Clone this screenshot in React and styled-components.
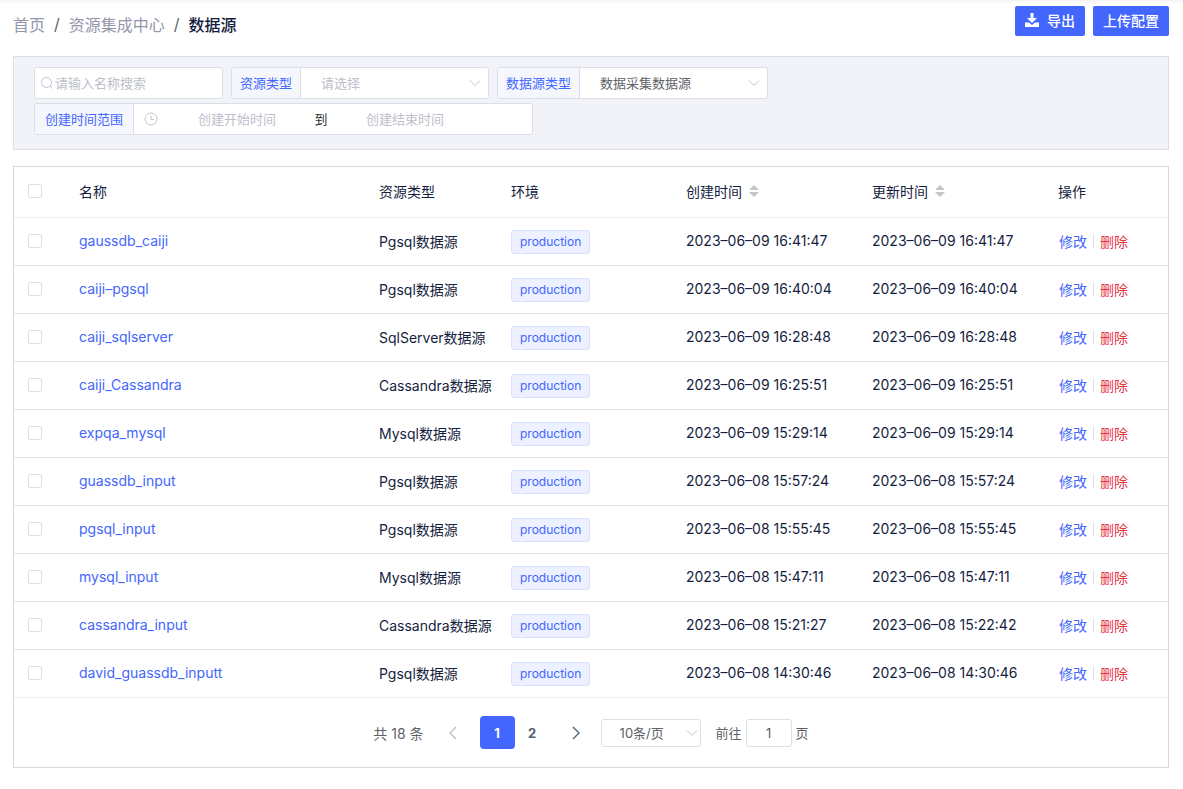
import React, { useState } from 'react';
import styled, { createGlobalStyle, css } from 'styled-components';

const GlobalStyle = createGlobalStyle`
  *, *::before, *::after {
    box-sizing: border-box;
  }

  body {
    margin: 0;
    background: #fff;
    color: #151e40;
    font-family: Inter, 'Noto Sans CJK SC', sans-serif;
    font-size: 14px;
  }

  input, select, button {
    font-family: inherit;
  }
`;

const Page = styled.div`
  padding: 0 14px 20px 13px;
  background: linear-gradient(#f3f3f4, #fff) top / 100% 4px no-repeat;
`;

const Header = styled.header`
  display: flex;
  justify-content: space-between;
  padding: 6px 0 14px;
`;

const Breadcrumb = styled.nav`
  display: flex;
  align-items: center;
  gap: 9px;
  height: 36px;
  font-size: 16px;
  color: #5c6375;

  a {
    color: #9495aa;
    text-decoration: none;
  }

  strong {
    color: #151e40;
    font-weight: 500;
  }
`;

const Actions = styled.div`
  display: flex;
  align-items: flex-start;
  gap: 8px;
`;

const PrimaryButton = styled.button`
  display: flex;
  align-items: center;
  gap: 8px;
  height: 30px;
  padding: 0 10px 2px;
  border: 0;
  border-radius: 2px;
  background: #4366ff;
  color: #fff;
  font-size: 14px;
  font-weight: 500;
`;

const FilterPanel = styled.form`
  display: flex;
  flex-wrap: wrap;
  gap: 4px 8px;
  margin-bottom: 16px;
  padding: 10px 380px 14px 20px;
  border: 1px solid #dbdde8;
  background: #f2f3f8;
`;

const Field = styled.div`
  position: relative;
  display: flex;
  align-items: center;
  width: ${({ $width }) => $width}px;
  height: 32px;
  border: 1px solid #dbdee7;
  border-radius: 3px;
  background: #fff;
  overflow: hidden;
  font-size: 13px;
`;

const FieldLabel = styled.label`
  flex: none;
  display: flex;
  align-items: center;
  height: 100%;
  padding: 0 ${({ $pad = 8 }) => $pad}px 2px;
  border-right: 1px solid #dbdee7;
  background: #f5f7fc;
  color: #4366ff;
`;

const bareControl = css`
  min-width: 0;
  height: 100%;
  padding: 0;
  border: 0;
  outline: 0;
  background: transparent;
  font-size: 13px;

  &::placeholder {
    color: #bcc0ca;
    opacity: 1;
  }
`;

const TextInput = styled.input`
  ${bareControl}
  flex: 1;
`;

const Select = styled.select`
  ${bareControl}
  flex: 1;
  padding: 0 30px 0 ${({ $indent }) => $indent}px;
  appearance: none;
  color: ${({ $empty }) => ($empty ? '#bcc0ca' : '#606266')};
`;

const Arrow = styled.svg`
  position: absolute;
  right: ${({ $right = 7 }) => $right}px;
  top: 50%;
  margin-top: -6px;
  pointer-events: none;
`;

const SearchMark = styled.svg`
  flex: none;
  margin: 0 1px 0 5px;
`;

const ClockMark = styled.svg`
  flex: none;
  margin: 0 6px 0 10px;
`;

const DateInput = styled.input`
  ${bareControl}
  width: 146px;
  text-align: center;
`;

const RangeWord = styled.span`
  width: 22px;
  padding-bottom: 2px;
  text-align: center;
  color: #303133;
`;

const Card = styled.section`
  border: 1px solid #d8d9db;
`;

const Table = styled.table`
  width: 100%;
  table-layout: fixed;
  border-collapse: separate;
  border-spacing: 0;
`;

const Th = styled.th`
  height: 51px;
  padding: 0 10px 2px;
  border-bottom: 1px solid #ebeef5;
  font-weight: 400;
  text-align: left;
`;

const Td = styled.td`
  height: 48px;
  padding: 0 10px;
  border-bottom: 1px solid #e0e1e4;
  white-space: nowrap;

  tr:last-child & {
    border-bottom-color: #ebeef5;
  }
`;

const TextTd = styled(Td)`
  padding-bottom: 2px;
`;

const Checkbox = styled.input`
  display: block;
  width: 14px;
  height: 14px;
  margin: 0 0 0 4px;
  border: 1px solid #dcdfe6;
  border-radius: 2px;
  background: #fff;
  appearance: none;

  &:checked {
    border-color: #4366ff;
    background: #4366ff;
  }
`;

const NameLink = styled.a`
  color: #4366ff;
  text-decoration: none;
`;

const Tag = styled.span`
  display: block;
  width: fit-content;
  height: 24px;
  padding: 0 8px;
  border: 1px solid #d9e0ff;
  border-radius: 3px;
  background: #ecf0ff;
  color: #4366ff;
  font-size: 12px;
  line-height: 22px;
`;

const SortButton = styled.button`
  display: flex;
  align-items: center;
  gap: 7px;
  padding: 0;
  border: 0;
  background: none;
  color: inherit;
  font-size: 14px;
`;

const RowActions = styled.div`
  display: flex;
  align-items: center;
`;

const RowButton = styled.button`
  padding: 0 0 0 1px;
  border: 0;
  background: none;
  color: ${({ $danger }) => ($danger ? '#e93445' : '#4366ff')};
  font-size: 14px;

  & + & {
    margin-left: 6px;
    padding-left: 7px;
    background: linear-gradient(#dcdfe6, #dcdfe6) left center / 1px 14px no-repeat;
  }
`;

const Pagination = styled.nav`
  display: flex;
  align-items: center;
  justify-content: center;
  height: 69px;
  font-size: 13px;
  color: #606266;
`;

const Total = styled.span`
  font-size: 14px;
`;

const PageButton = styled.button`
  display: flex;
  align-items: center;
  justify-content: center;
  width: 35px;
  height: 33px;
  padding: 0;
  border: 0;
  border-radius: 4px;
  background: ${({ $active }) => ($active ? '#4366ff' : 'transparent')};
  color: ${({ $active }) => ($active ? '#fff' : '#4f6475')};
  font-size: 13px;
  font-weight: 700;
`;

const StepButton = styled(PageButton)`
  width: 24px;
  margin: 0 ${({ $after = 0 }) => $after}px 0 ${({ $before = 0 }) => $before}px;
  color: ${({ disabled }) => (disabled ? '#bcc0ca' : '#4f6475')};
`;

const SizeBox = styled.div`
  position: relative;
  display: flex;
  width: 100px;
  height: 28px;
  margin: 0 15px 0 12px;
  border: 1px solid #dcdfe6;
  border-radius: 3px;
`;

const Jump = styled.label`
  display: flex;
  align-items: center;
  gap: 4px;
`;

const JumpInput = styled.input`
  width: 46px;
  height: 28px;
  padding: 0;
  border: 1px solid #dcdfe6;
  border-radius: 3px;
  color: #606266;
  font-size: 13px;
  text-align: center;
`;

const Col = styled.col`
  width: ${({ $width }) => ($width ? `${$width}px` : 'auto')};
`;

const ChevronDown = ({ right }) => (
  <Arrow $right={right} width="12" height="12" viewBox="0 0 12 12" fill="none" stroke="#c0c4cc">
    <path d="M1 3.5l5 5 5-5" />
  </Arrow>
);

const Step = ({ flip }) => (
  <svg width="9" height="14" viewBox="0 0 9 14" fill="none" stroke="currentColor" strokeWidth="1.4">
    <path d={flip ? 'M8 1L2 7l6 6' : 'M1 1l6 6-6 6'} />
  </svg>
);

const SortIcon = () => (
  <svg width="10" height="12" viewBox="0 0 10 12" fill="#c0c4cc">
    <path d="M0 5l5-5 5 5zM0 7l5 5 5-5z" />
  </svg>
);

const DownloadIcon = () => (
  <svg width="14" height="15" viewBox="0 0 14 15" fill="#fff">
    <path d="M5.500 0h3v5h3.500L7 10 2 5h3.500z" />
    <path d="M0 9.500h4l3 2.500 3-2.500h4V14H0z" />
  </svg>
);

const rows = [
  ['gaussdb_caiji', 'Pgsql数据源', '2023-06-09 16:41:47', '2023-06-09 16:41:47'],
  ['caiji-pgsql', 'Pgsql数据源', '2023-06-09 16:40:04', '2023-06-09 16:40:04'],
  ['caiji_sqlserver', 'SqlServer数据源', '2023-06-09 16:28:48', '2023-06-09 16:28:48'],
  ['caiji_Cassandra', 'Cassandra数据源', '2023-06-09 16:25:51', '2023-06-09 16:25:51'],
  ['expqa_mysql', 'Mysql数据源', '2023-06-09 15:29:14', '2023-06-09 15:29:14'],
  ['guassdb_input', 'Pgsql数据源', '2023-06-08 15:57:24', '2023-06-08 15:57:24'],
  ['pgsql_input', 'Pgsql数据源', '2023-06-08 15:55:45', '2023-06-08 15:55:45'],
  ['mysql_input', 'Mysql数据源', '2023-06-08 15:47:11', '2023-06-08 15:47:11'],
  ['cassandra_input', 'Cassandra数据源', '2023-06-08 15:21:27', '2023-06-08 15:22:42'],
  ['david_guassdb_inputt', 'Pgsql数据源', '2023-06-08 14:30:46', '2023-06-08 14:30:46'],
];

// hyphens are shown as en dashes in the table
const withDashes = value => value.replace(/-/g, '–');

const Filters = () => (
  <FilterPanel>
    <Field $width={189}>
      <SearchMark width="14" height="14" viewBox="0 0 14 14" fill="none" stroke="#c0c4cc">
        <circle cx="6.500" cy="6.500" r="5" />
        <path d="M10 10l2.500 2.500" />
      </SearchMark>
      <TextInput type="text" aria-label="名称" placeholder="请输入名称搜索" />
    </Field>
    <Field $width={258}>
      <FieldLabel htmlFor="resource-type">资源类型</FieldLabel>
      <Select id="resource-type" $indent={20} $empty defaultValue="">
        <option value="">请选择</option>
      </Select>
      <ChevronDown />
    </Field>
    <Field $width={271}>
      <FieldLabel htmlFor="source-type">数据源类型</FieldLabel>
      <Select id="source-type" $indent={20} defaultValue="collect">
        <option value="collect">数据采集数据源</option>
      </Select>
      <ChevronDown />
    </Field>
    <Field $width={499}>
      <FieldLabel htmlFor="created-from" $pad={10}>创建时间范围</FieldLabel>
      <ClockMark width="14" height="14" viewBox="0 0 14 14" fill="none" stroke="#c0c4cc">
        <circle cx="7" cy="7" r="6" />
        <path d="M7 3.500V7.500h3" />
      </ClockMark>
      <DateInput id="created-from" type="text" placeholder="创建开始时间" />
      <RangeWord>到</RangeWord>
      <DateInput type="text" aria-label="创建结束时间" placeholder="创建结束时间" />
    </Field>
  </FilterPanel>
);

const SourceTable = () => (
  <Table>
    <colgroup>
      <Col $width={55} />
      <Col />
      <Col $width={132} />
      <Col $width={175} />
      <Col $width={186} />
      <Col $width={186} />
      <Col $width={120} />
    </colgroup>
    <thead>
      <tr>
        <Th><Checkbox type="checkbox" aria-label="全选" /></Th>
        <Th>名称</Th>
        <Th>资源类型</Th>
        <Th>环境</Th>
        <Th><SortButton type="button">创建时间<SortIcon /></SortButton></Th>
        <Th><SortButton type="button">更新时间<SortIcon /></SortButton></Th>
        <Th>操作</Th>
      </tr>
    </thead>
    <tbody>
      {rows.map(([name, type, created, updated]) => (
        <tr key={name}>
          <TextTd><Checkbox type="checkbox" aria-label={name} /></TextTd>
          <TextTd><NameLink href="#">{withDashes(name)}</NameLink></TextTd>
          <TextTd>{type}</TextTd>
          <Td><Tag>production</Tag></Td>
          <TextTd>{withDashes(created)}</TextTd>
          <TextTd>{withDashes(updated)}</TextTd>
          <TextTd>
            <RowActions>
              <RowButton type="button">修改</RowButton>
              <RowButton type="button" $danger>删除</RowButton>
            </RowActions>
          </TextTd>
        </tr>
      ))}
    </tbody>
  </Table>
);

const App = () => {
  const [page, setPage] = useState(1);

  return (
    <Page>
      <GlobalStyle />
      <Header>
        <Breadcrumb>
          <a href="#">首页</a>
          <span>/</span>
          <a href="#">资源集成中心</a>
          <span>/</span>
          <strong>数据源</strong>
        </Breadcrumb>
        <Actions>
          <PrimaryButton type="button"><DownloadIcon />导出</PrimaryButton>
          <PrimaryButton type="button">上传配置</PrimaryButton>
        </Actions>
      </Header>

      <Filters />

      <Card>
        <SourceTable />
        <Pagination>
          <Total>共 18 条</Total>
          <StepButton type="button" aria-label="上一页" $before={17} $after={15} disabled={page === 1} onClick={() => setPage(1)}>
            <Step flip />
          </StepButton>
          {[1, 2].map(n => (
            <PageButton key={n} type="button" $active={page === n} onClick={() => setPage(n)}>{n}</PageButton>
          ))}
          <StepButton type="button" aria-label="下一页" $before={15} disabled={page === 2} onClick={() => setPage(2)}>
            <Step />
          </StepButton>
          <SizeBox>
            <Select $indent={18} aria-label="每页条数" defaultValue="10">
              <option value="10">10条/页</option>
            </Select>
            <ChevronDown right={2} />
          </SizeBox>
          <Jump>
            前往
            <JumpInput type="text" defaultValue="1" />
            页
          </Jump>
        </Pagination>
      </Card>
    </Page>
  );
};

export default App;
